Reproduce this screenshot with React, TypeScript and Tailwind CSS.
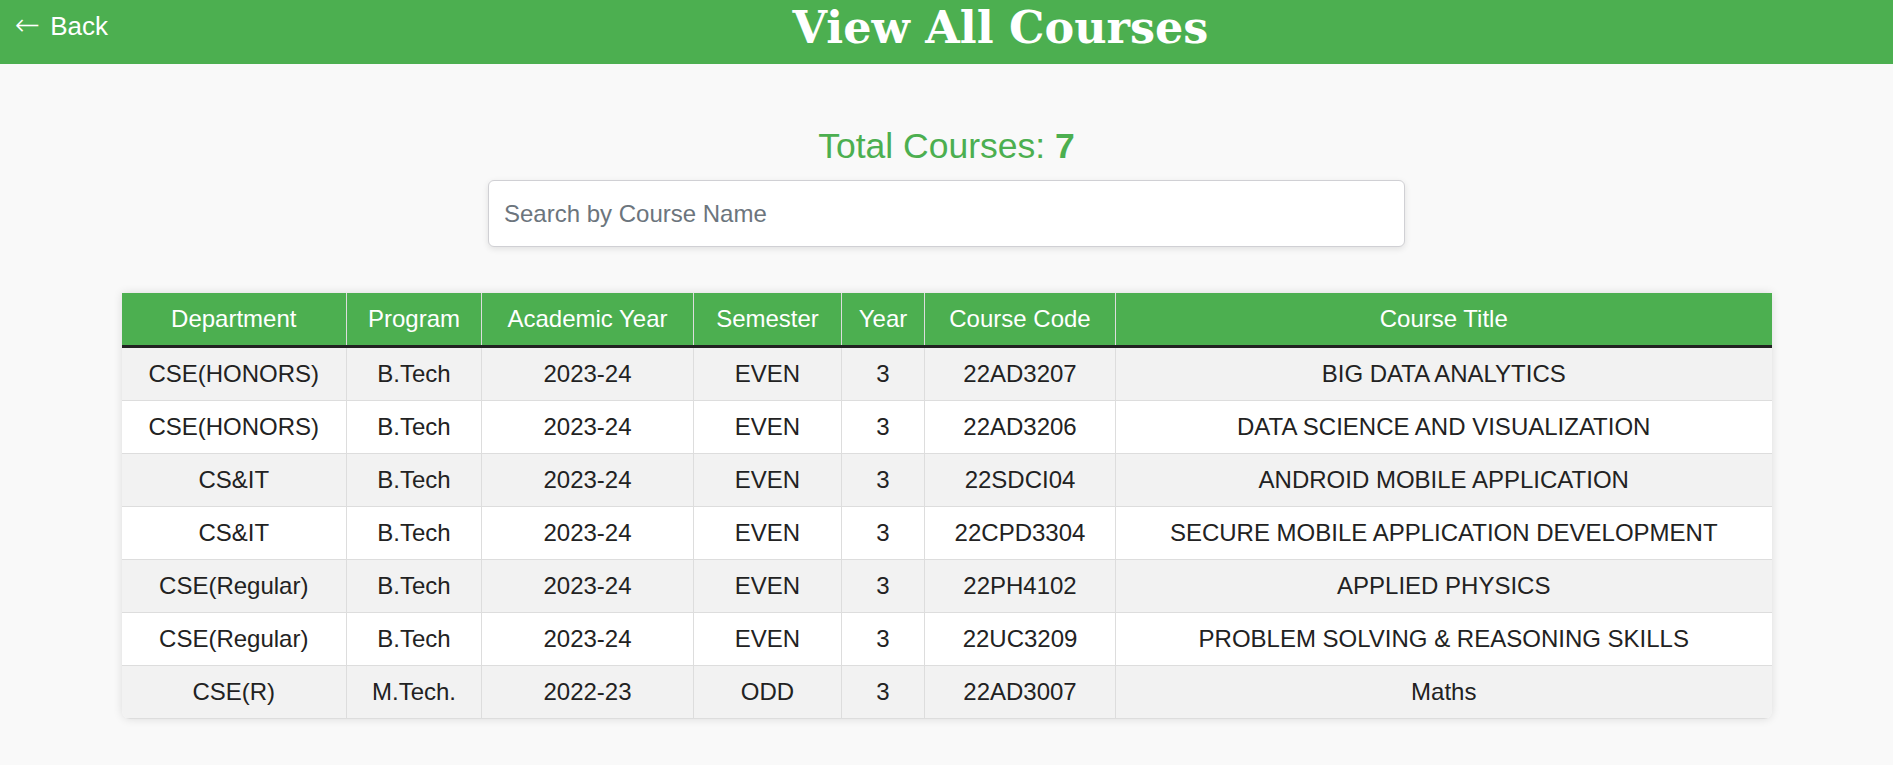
import React from "react"

type Course = {
  dept: string
  program: string
  year: string
  sem: string
  yr: string
  code: string
  title: string
}

const courses: Course[] = [
  { dept: "CSE(HONORS)", program: "B.Tech", year: "2023-24", sem: "EVEN", yr: "3", code: "22AD3207", title: "BIG DATA ANALYTICS" },
  { dept: "CSE(HONORS)", program: "B.Tech", year: "2023-24", sem: "EVEN", yr: "3", code: "22AD3206", title: "DATA SCIENCE AND VISUALIZATION" },
  { dept: "CS&IT", program: "B.Tech", year: "2023-24", sem: "EVEN", yr: "3", code: "22SDCI04", title: "ANDROID MOBILE APPLICATION" },
  { dept: "CS&IT", program: "B.Tech", year: "2023-24", sem: "EVEN", yr: "3", code: "22CPD3304", title: "SECURE MOBILE APPLICATION DEVELOPMENT" },
  { dept: "CSE(Regular)", program: "B.Tech", year: "2023-24", sem: "EVEN", yr: "3", code: "22PH4102", title: "APPLIED PHYSICS" },
  { dept: "CSE(Regular)", program: "B.Tech", year: "2023-24", sem: "EVEN", yr: "3", code: "22UC3209", title: "PROBLEM SOLVING & REASONING SKILLS" },
  { dept: "CSE(R)", program: "M.Tech.", year: "2022-23", sem: "ODD", yr: "3", code: "22AD3007", title: "Maths" },
]

const headers = ["Department", "Program", "Academic Year", "Semester", "Year", "Course Code", "Course Title"]
const widths = ["w-[225px]", "w-[135px]", "w-[212px]", "w-[148px]", "w-[83px]", "w-[191px]", "w-[656px]"]

const Cell = ({ children, last }: { children: React.ReactNode; last?: boolean }) => {
  return (
    <td className={`border-b border-[#dddddd] py-3 text-center leading-[28px] ${last ? "" : "border-r"}`}>
      {children}
    </td>
  )
}

export default function App() {
  return (
    <div className="min-h-screen bg-[#f9f9f9] font-['Liberation_Sans',Arial,sans-serif] text-[#222]">
      <div className="flex h-[64px] items-start bg-[#4caf50] text-white">
        <button className="flex items-baseline gap-[10px] pl-[15px] pt-[10px] text-[26px] leading-[30px] text-white">
          <span className="font-['DejaVu_Sans',sans-serif] text-[30px] font-extralight">←</span>
          <span>Back</span>
        </button>
        <h1 className="flex-1 pt-[3px] text-center font-['DejaVu_Serif',Georgia,serif] text-[44.5px] font-bold leading-[48px]">
          View All Courses
        </h1>
      </div>

      <div className="flex flex-col items-center">
        <p className="mt-[62px] text-[35.5px] leading-[40px] text-[#4caf50]">
          Total Courses: <span className="font-bold">7</span>
        </p>
        <input
          type="text"
          placeholder="Search by Course Name"
          className="mt-[14px] h-[67px] w-[917px] rounded-md border border-[#d0d0d4] bg-white px-[15px] text-[24px] shadow-[0_2px_6px_rgba(0,0,0,0.1)] outline-none placeholder:text-[#6c757d]"
        />

        <div className="mt-[46px] mb-10 w-[1650px] overflow-hidden rounded-b-lg shadow-[0_0_10px_rgba(0,0,0,0.12)]">
          <table className="w-full table-fixed border-collapse text-[24px]">
            <colgroup>
              {widths.map((w, i) => (
                <col key={i} className={w} />
              ))}
            </colgroup>
            <thead>
              <tr className="bg-[#4caf50] text-white">
                {headers.map((h, i) => (
                  <th
                    key={h}
                    className={`h-[53px] border-b-[3px] border-b-[#222] font-normal leading-[28px] ${i < headers.length - 1 ? "border-r border-r-[#ddd]" : ""}`}
                  >
                    {h}
                  </th>
                ))}
              </tr>
            </thead>
            <tbody>
              {courses.map((c, i) => (
                <tr key={c.code} className={i % 2 === 0 ? "bg-[#f2f2f2]" : "bg-white"}>
                  <Cell>{c.dept}</Cell>
                  <Cell>{c.program}</Cell>
                  <Cell>{c.year}</Cell>
                  <Cell>{c.sem}</Cell>
                  <Cell>{c.yr}</Cell>
                  <Cell>{c.code}</Cell>
                  <Cell last>{c.title}</Cell>
                </tr>
              ))}
            </tbody>
          </table>
        </div>
      </div>
    </div>
  )
}
